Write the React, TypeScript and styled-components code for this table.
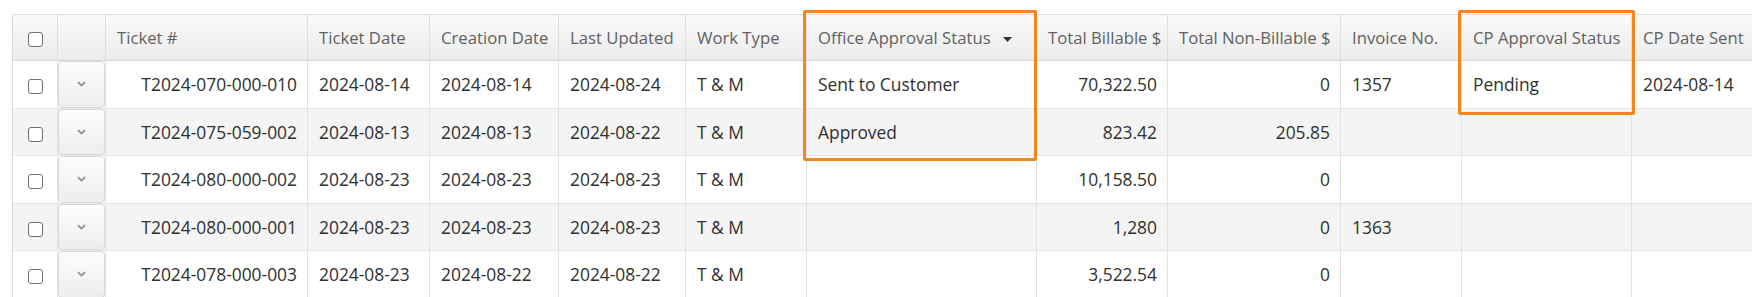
import React from 'react';
import styled, { createGlobalStyle } from 'styled-components';

type Align = 'left' | 'right';

interface Column {
  title: string;
  width: number;
  align: Align;
  sorted?: boolean;
}

const CHECK_W = 45;
const EXPAND_W = 48;

const columns: Column[] = [
  { title: 'Ticket #', width: 202, align: 'right' },
  { title: 'Ticket Date', width: 122, align: 'left' },
  { title: 'Creation Date', width: 129, align: 'left' },
  { title: 'Last Updated', width: 127, align: 'left' },
  { title: 'Work Type', width: 121, align: 'left' },
  { title: 'Office Approval Status', width: 230, align: 'left', sorted: true },
  { title: 'Total Billable $', width: 131, align: 'right' },
  { title: 'Total Non-Billable $', width: 173, align: 'right' },
  { title: 'Invoice No.', width: 121, align: 'left' },
  { title: 'CP Approval Status', width: 170, align: 'left' },
  { title: 'CP Date Sent', width: 140, align: 'left' },
];

const tableWidth = CHECK_W + EXPAND_W + columns.reduce((s, c) => s + c.width, 0) + 1;

const rows: string[][] = [
  ['T2024-070-000-010', '2024-08-14', '2024-08-14', '2024-08-24', 'T & M', 'Sent to Customer', '70,322.50', '0', '1357', 'Pending', '2024-08-14'],
  ['T2024-075-059-002', '2024-08-13', '2024-08-13', '2024-08-22', 'T & M', 'Approved', '823.42', '205.85', '', '', ''],
  ['T2024-080-000-002', '2024-08-23', '2024-08-23', '2024-08-23', 'T & M', '', '10,158.50', '0', '', '', ''],
  ['T2024-080-000-001', '2024-08-23', '2024-08-23', '2024-08-23', 'T & M', '', '1,280', '0', '1363', '', ''],
  ['T2024-078-000-003', '2024-08-23', '2024-08-22', '2024-08-22', 'T & M', '', '3,522.54', '0', '', '', ''],
];

const App = () => (
  <React.Fragment>
    <GlobalStyles />
    <Page>
      <GridWrap>
        <Grid style={{ width: tableWidth }}>
          <colgroup>
            <col style={{ width: CHECK_W }} />
            <col style={{ width: EXPAND_W }} />
            {columns.map((c) => (
              <col key={c.title} style={{ width: c.width }} />
            ))}
          </colgroup>
          <thead>
            <tr>
              <HeadCell $align={'center'}>
                <Check />
              </HeadCell>
              <HeadCell $align={'center'} />
              {columns.map((c) => (
                <HeadCell key={c.title} $align={'left'}>
                  {c.title}
                  {c.sorted && (
                    <SortIcon width={9} height={5} viewBox={'0 0 9 5'}>
                      <path d={'M0 0h9L4.5 5z'} fill={'#333'} />
                    </SortIcon>
                  )}
                </HeadCell>
              ))}
            </tr>
          </thead>
          <tbody>
            {rows.map((r, i) => (
              <BodyRow key={r[0]} $odd={i % 2 === 1}>
                <Cell $align={'center'}>
                  <Check />
                </Cell>
                <ExpandCell>
                  <ExpandButton>
                    <svg width={9} height={6} viewBox={'0 0 9 6'}>
                      <path d={'M1 1.2l3.5 3.3L8 1.2'} fill={'none'} stroke={'#8c8c8c'} strokeWidth={1.7} />
                    </svg>
                  </ExpandButton>
                </ExpandCell>
                {r.map((v, j) => (
                  <Cell key={j} $align={columns[j].align}>
                    {v}
                  </Cell>
                ))}
              </BodyRow>
            ))}
          </tbody>
        </Grid>
        <Highlight $left={791} $width={234} $height={151} />
        <Highlight $left={1446} $width={177} $height={105} />
      </GridWrap>
    </Page>
  </React.Fragment>
);

export default App;

const GlobalStyles = createGlobalStyle`
  html, body {
    margin: 0;
    padding: 0;
    background: #fff;
    overflow: hidden;
  }
  body {
    font-family: 'Open Sans', 'Noto Sans', sans-serif;
  }
`;

const Page = styled('main')`
  padding: 14px 0 0 12px;
  width: 1800px;
`;

const GridWrap = styled('div')`
  position: relative;
  display: inline-block;
`;

const Grid = styled('table')`
  table-layout: fixed;
  border-collapse: separate;
  border-spacing: 0;
  border-top: 1px solid #dcdcdc;
  border-left: 1px solid #dcdcdc;
  font-size: 17.4px;
`;

const HeadCell = styled('th')<{ $align: 'left' | 'center' }>`
  height: 46px;
  padding: 0 10px 0 11px;
  box-sizing: border-box;
  text-align: ${(p) => p.$align};
  font-weight: 400;
  font-size: 16.7px;
  color: #616161;
  white-space: nowrap;
  background: linear-gradient(#f9f9f9, #ececec);
  border-right: 1px solid #dedede;
  border-bottom: 1px solid #d6d6d6;
  vertical-align: middle;
`;

const BodyRow = styled('tr')<{ $odd: boolean }>`
  background: ${(p) => (p.$odd ? '#f4f4f4' : '#fff')};
`;

const Cell = styled('td')<{ $align: Align | 'center' }>`
  height: 46.5px;
  padding: 0 10px 0 11px;
  box-sizing: border-box;
  text-align: ${(p) => p.$align};
  color: #303030;
  white-space: nowrap;
  border-right: 1px solid #e2e2e2;
  border-bottom: 1px solid #e6e6e6;
  vertical-align: middle;
`;

const ExpandCell = styled('td')`
  padding: 0;
  height: 46.5px;
  border-right: 1px solid #e2e2e2;
  border-bottom: 1px solid #e6e6e6;
  vertical-align: top;
`;

const ExpandButton = styled('div')`
  display: flex;
  align-items: center;
  justify-content: center;
  height: 46.5px;
  box-sizing: border-box;
  border: 1px solid #d9d9d9;
  border-radius: 4px;
  background: linear-gradient(#fdfdfd, #ededed);
`;

const Check = styled('span')`
  display: inline-block;
  width: 15px;
  height: 15px;
  box-sizing: border-box;
  border: 1px solid #6f6f6f;
  border-radius: 3px;
  background: #fff;
  vertical-align: middle;
`;

const SortIcon = styled('svg')`
  margin-left: 12px;
  vertical-align: middle;
`;

const Highlight = styled('div')<{ $left: number; $width: number; $height: number }>`
  position: absolute;
  top: -4px;
  left: ${(p) => p.$left}px;
  width: ${(p) => p.$width}px;
  height: ${(p) => p.$height}px;
  box-sizing: border-box;
  border: 3px solid #f0861f;
  border-radius: 2px;
  pointer-events: none;
`;
